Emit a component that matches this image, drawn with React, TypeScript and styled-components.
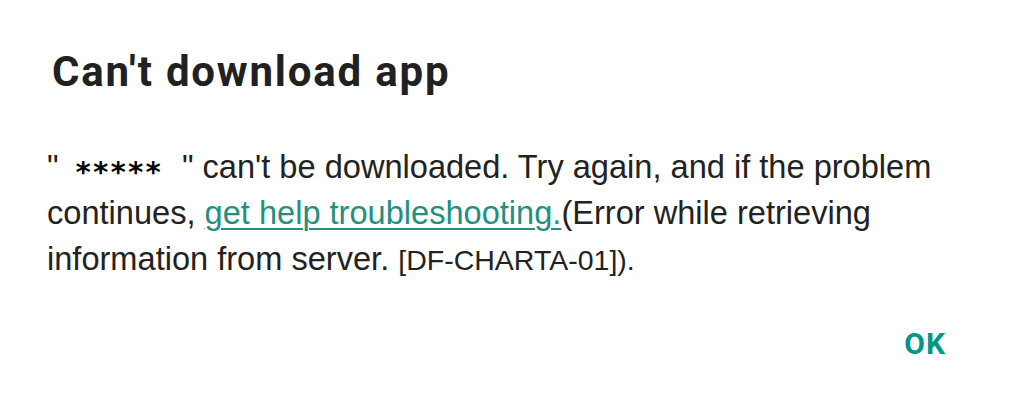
import React from "react";
import styled, { createGlobalStyle } from "styled-components";

const Global = createGlobalStyle`
  html, body { margin: 0; padding: 0; background: #ffffff; }
  body { width: 1024px; height: 406px; overflow: hidden; }
`;

const Dialog = styled.div`
  box-sizing: border-box;
  width: 1024px;
  height: 406px;
  padding: 46px 0 0 0;
  display: flex;
  flex-direction: column;
  background: #fff;
`;

const Title = styled.h1`
  margin: 0 0 0 52px;
  font-family: Roboto, "Liberation Sans", sans-serif;
  font-weight: 700;
  font-size: 42px;
  line-height: 52px;
  letter-spacing: 1.8px;
  color: #212121;
`;

const Body = styled.p`
  margin: 46px 60px 0 47px;
  font-family: "Liberation Sans", Arial, sans-serif;
  font-size: 32.6px;
  line-height: 46px;
  color: #222222;
`;

const Stars = styled.span`
  display: inline-block;
  font-family: "DejaVu Sans Mono", monospace;
  font-weight: 700;
  font-size: 29px;
  line-height: 20px;
  color: #000;
  vertical-align: -4px;
  margin: 0 20px 0 16px;
`;

const Link = styled.a`
  color: #23907e;
  text-decoration: underline;
  text-underline-offset: 4px;
  text-decoration-thickness: 2px;
`;

const Small = styled.span`
  font-size: 28.5px;
`;

const Actions = styled.div`
  display: flex;
  justify-content: flex-end;
  margin-top: auto;
  padding: 0 78px 45px 0;
`;

const OkButton = styled.button`
  border: none;
  background: none;
  padding: 0;
  font-family: Roboto, "Liberation Sans", sans-serif;
  font-weight: 700;
  font-size: 30px;
  letter-spacing: 1px;
  color: #009688;
  cursor: pointer;
`;

export default function App() {
  return (
    <>
      <Global />
      <Dialog>
        <Title>Can't download app</Title>
        <Body>
          "<Stars>*****</Stars>" can't be downloaded. Try again, and if the problem continues,{" "}
          <Link href="#">get help troubleshooting.</Link>(Error while retrieving information from server.{" "}
          <Small>[DF-CHARTA-01]).</Small>
        </Body>
        <Actions>
          <OkButton>OK</OkButton>
        </Actions>
      </Dialog>
    </>
  );
}
